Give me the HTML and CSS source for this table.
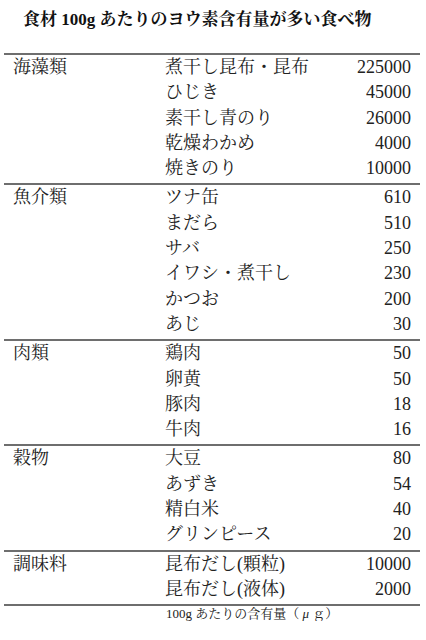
FILE: index.html
```html
<!DOCTYPE html>
<html lang="ja">
<head>
<meta charset="utf-8">
<title>ヨウ素含有量</title>
<link rel="stylesheet" href="styles.css">
</head>
<body>
<div class="page">
  <h1 class="title">食材 100g あたりのヨウ素含有量が多い食べ物</h1>
  <div class="table">
    <div class="group">
      <div class="cat">海藻類</div>
      <div class="items">
        <div class="row"><span>煮干し昆布・昆布</span><span>225000</span></div>
        <div class="row"><span>ひじき</span><span>45000</span></div>
        <div class="row"><span>素干し青のり</span><span>26000</span></div>
        <div class="row"><span>乾燥わかめ</span><span>4000</span></div>
        <div class="row"><span>焼きのり</span><span>10000</span></div>
      </div>
    </div>
    <div class="group">
      <div class="cat">魚介類</div>
      <div class="items">
        <div class="row"><span>ツナ缶</span><span>610</span></div>
        <div class="row"><span>まだら</span><span>510</span></div>
        <div class="row"><span>サバ</span><span>250</span></div>
        <div class="row"><span>イワシ・煮干し</span><span>230</span></div>
        <div class="row"><span>かつお</span><span>200</span></div>
        <div class="row"><span>あじ</span><span>30</span></div>
      </div>
    </div>
    <div class="group">
      <div class="cat">肉類</div>
      <div class="items">
        <div class="row"><span>鶏肉</span><span>50</span></div>
        <div class="row"><span>卵黄</span><span>50</span></div>
        <div class="row"><span>豚肉</span><span>18</span></div>
        <div class="row"><span>牛肉</span><span>16</span></div>
      </div>
    </div>
    <div class="group">
      <div class="cat">穀物</div>
      <div class="items">
        <div class="row"><span>大豆</span><span>80</span></div>
        <div class="row"><span>あずき</span><span>54</span></div>
        <div class="row"><span>精白米</span><span>40</span></div>
        <div class="row"><span>グリンピース</span><span>20</span></div>
      </div>
    </div>
    <div class="group last">
      <div class="cat">調味料</div>
      <div class="items">
        <div class="row"><span>昆布だし(顆粒)</span><span>10000</span></div>
        <div class="row"><span>昆布だし(液体)</span><span>2000</span></div>
      </div>
    </div>
  </div>
  <div class="note">100g あたりの含有量（<span class="fw">μ</span>ｇ）</div>
</div>
</body>
</html>
```
FILE: styles.css
```css
html, body {
  margin: 0;
  padding: 0;
  background: #ffffff;
}
body {
  font-family: "Liberation Serif", "Noto Serif CJK JP", "Noto Sans CJK JP", serif;
  color: #222222;
}
.page {
  padding: 8px 6px 0 4px;
}
.title {
  margin: 0 0 21px 19px;
  font-size: 17px;
  line-height: 24px;
  font-weight: bold;
  color: #111111;
}
.group {
  display: flex;
  border-top: 2px solid #6e6e6e;
  padding-bottom: 2px;
  font-size: 18px;
}
.group.last {
  border-bottom: 2px solid #6e6e6e;
}
.cat {
  width: 152px;
  padding-left: 9px;
  line-height: 25.3px;
  flex: none;
}
.items {
  flex: 1;
  padding-right: 9px;
}
.row {
  display: flex;
  justify-content: space-between;
  line-height: 25.3px;
}
.note {
  padding-left: 162px;
  font-size: 13px;
  line-height: 14px;
  margin-top: 1px;
}
.fw {
  display: inline-block;
  width: 1em;
  text-align: center;
  font-style: italic;
}
```
